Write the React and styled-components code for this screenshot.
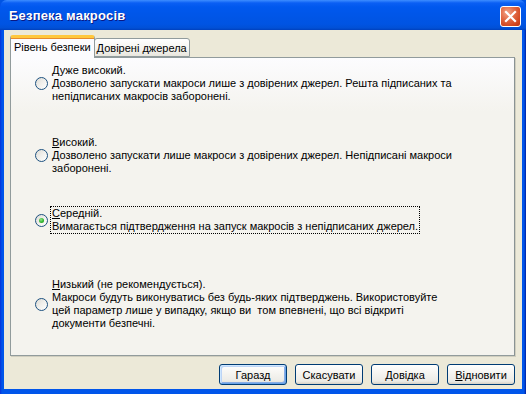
import React from "react";
import styled, { createGlobalStyle } from "styled-components";

const Global = createGlobalStyle`
  html, body { margin: 0; padding: 0; background: #0054E3; }
  body { width: 526px; height: 394px; overflow: hidden; }
  #root { width: 526px; height: 394px; }
`;

const Window = styled.div`
  width: 526px;
  height: 394px;
  box-sizing: border-box;
  display: flex;
  flex-direction: column;
  background: linear-gradient(90deg, #0831D9 0, #0055EA 2px, #0055EA calc(100% - 2px), #001EA0 100%);
  border-radius: 7px 7px 0 0;
  font-family: "Liberation Sans", Arial, sans-serif;
  font-size: 11px;
  color: #000;
`;

const TitleBar = styled.div`
  height: 30px;
  flex: none;
  display: flex;
  align-items: center;
  justify-content: space-between;
  padding: 0 5px 0 9px;
  border-radius: 7px 7px 0 0;
  background: linear-gradient(180deg, #3D8DFF 0, #0A5FF4 3px, #0058EE 7px, #0055E6 18px, #0054E3 24px, #0150D6 28px, #0040BD 30px);
`;

const Title = styled.span`
  color: #fff;
  font-family: "Liberation Sans", Arial, sans-serif;
  font-weight: bold;
  font-size: 13px;
  letter-spacing: 0.2px;
  text-shadow: 1px 1px 0 #0A1883;
  margin-top: 1px;
`;

const CloseButton = styled.div`
  width: 19px;
  height: 19px;
  border: 1px solid #fff;
  border-radius: 3px;
  background: radial-gradient(circle at 35% 30%, #F3A58A 0, #E26A45 40%, #D2461F 75%, #B73410 100%);
  display: flex;
  align-items: center;
  justify-content: center;
  margin-top: 2px;
`;

const Client = styled.div`
  flex: 1;
  margin: 0 4px 5px 4px;
  background: #ECE9D8;
  padding: 5px 7px 0 6px;
  display: flex;
  flex-direction: column;
`;

const TabRow = styled.div`
  display: flex;
  align-items: flex-end;
  height: 22px;
  position: relative;
  z-index: 1;
`;

const Tab = styled.div`
  box-sizing: border-box;
  height: ${(p) => (p.$active ? "23px" : "19px")};
  padding: 0 ${(p) => (p.$active ? "3px" : "2px")};
  margin-bottom: ${(p) => (p.$active ? "-1px" : "0")};
  display: flex;
  align-items: center;
  justify-content: center;
  border: 1px solid #919B9C;
  border-bottom: ${(p) => (p.$active ? "none" : "1px solid #919B9C")};
  border-top: ${(p) => (p.$active ? "3px solid #FFC83C" : "1px solid #919B9C")};
  border-radius: 3px 3px 0 0;
  background: ${(p) =>
    p.$active ? "#FCFCFE" : "linear-gradient(180deg, #FFFFFF 0, #F4F3EE 60%, #E8E6DE 100%)"};
  box-shadow: ${(p) => (p.$active ? "inset 0 1px 0 #E68B2C" : "none")};
  margin-left: ${(p) => (p.$active ? "0" : "-1px")};
  white-space: nowrap;
  padding-bottom: ${(p) => (p.$active ? "2px" : "0")};
`;

const Panel = styled.div`
  height: 299px;
  box-sizing: border-box;
  border: 1px solid #919B9C;
  border-right-color: #8A9394;
  background: linear-gradient(180deg, #FCFCFE 0, #F4F3EE 18%, #F4F3EE 100%);
  box-shadow: 1px 1px 0 #D0CEBF;
  padding: 6px 0 0 24px;
  display: flex;
  flex-direction: column;
`;

const Option = styled.div`
  display: flex;
  align-items: center;
  gap: 3px;
  margin-top: ${(p) => p.$top}px;
`;

const Radio = styled.span`
  width: 13px;
  height: 13px;
  box-sizing: border-box;
  border-radius: 50%;
  border: 1px solid #1C5180;
  background: linear-gradient(135deg, #DCDBD5 0, #EFEEEA 45%, #FFFFFF 100%);
  display: flex;
  align-items: center;
  justify-content: center;
  flex: none;
`;

const Dot = styled.span`
  width: 5px;
  height: 5px;
  border-radius: 50%;
  background: radial-gradient(circle at 40% 35%, #8FE58C 0, #30B52E 55%, #1E8A1C 100%);
`;

const Label = styled.div`
  line-height: 13px;
  padding: 0 1px;
  outline: ${(p) => (p.$focus ? "1px dotted #000" : "none")};
  outline-offset: 0;
`;

const U = styled.span`
  text-decoration: underline;
  text-underline-offset: 1px;
`;

const ButtonRow = styled.div`
  display: flex;
  justify-content: flex-end;
  gap: 8px;
  margin-top: 8px;
`;

const Button = styled.div`
  width: 68px;
  height: 21px;
  box-sizing: border-box;
  border: 1px solid #003C74;
  border-radius: 3px;
  display: flex;
  align-items: center;
  justify-content: center;
  background: linear-gradient(180deg, #FFFFFF 0, #F6F5F1 40%, #ECEBE6 85%, #D6D0C5 100%);
  box-shadow: ${(p) =>
    p.$default
      ? "inset 1px 1px 0 #CEE7FF, inset -1px -1px 0 #69A3E8, inset 2px 2px 0 #BCD4F6, inset -2px -2px 0 #89ADE4"
      : "none"};
`;

const Close = () => (
  <svg width="13" height="13" viewBox="0 0 13 13">
    <path d="M2 2 L11 11 M11 2 L2 11" stroke="#fff" strokeWidth="2.2" strokeLinecap="square" />
  </svg>
);

export default function App() {
  return (
    <>
      <Global />
      <Window>
        <TitleBar>
          <Title>Безпека макросів</Title>
          <CloseButton>
            <Close />
          </CloseButton>
        </TitleBar>
        <Client>
          <TabRow>
            <Tab $active>Рівень безпеки</Tab>
            <Tab>Довірені джерела</Tab>
          </TabRow>
          <Panel>
            <Option $top={0}>
              <Radio />
              <Label>
                <U>Д</U>уже високий.
                <br />
                Дозволено запускати макроси лише з довірених джерел. Решта підписаних та
                <br />
                непідписаних макросів заборонені.
              </Label>
            </Option>
            <Option $top={33}>
              <Radio />
              <Label>
                <U>В</U>исокий.
                <br />
                Дозволено запускати лише макроси з довірених джерел. Непідписані макроси
                <br />
                заборонені.
              </Label>
            </Option>
            <Option $top={32}>
              <Radio>
                <Dot />
              </Radio>
              <Label $focus>
                <U>С</U>ередній.
                <br />
                Вимагається підтвердження на запуск макросів з непідписаних джерел.
              </Label>
            </Option>
            <Option $top={45}>
              <Radio />
              <Label>
                <U>Н</U>изький (не рекомендується).
                <br />
                Макроси будуть виконуватись без будь-яких підтверджень. Використовуйте
                <br />
                {"цей параметр лише у випадку, якщо ви\u00a0 том впевнені, що всі відкриті"}
                <br />
                документи безпечні.
              </Label>
            </Option>
          </Panel>
          <ButtonRow>
            <Button $default>Гаразд</Button>
            <Button>Скасувати</Button>
            <Button>
              <span>
                <U>Д</U>овідка
              </span>
            </Button>
            <Button>
              <span>
                <U>В</U>ідновити
              </span>
            </Button>
          </ButtonRow>
        </Client>
      </Window>
    </>
  );
}
